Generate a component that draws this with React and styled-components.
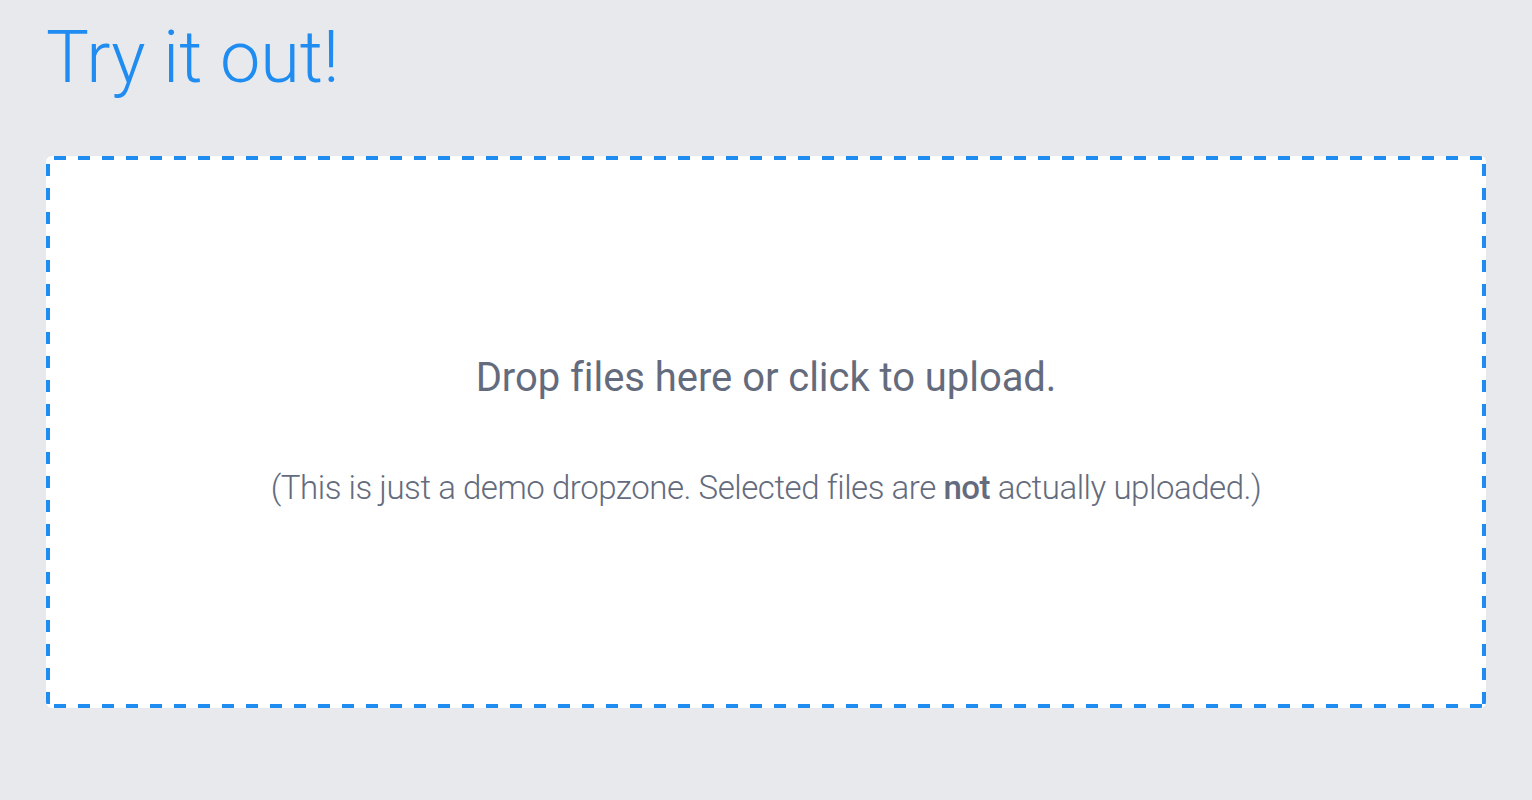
import React from "react";
import styled, { createGlobalStyle } from "styled-components";

const GlobalStyle = createGlobalStyle`
  html, body {
    margin: 0;
    padding: 0;
    background: #e8e9ed;
  }
  body {
    font-family: Roboto, "Open Sans", sans-serif;
  }
`;

const blue = "#1e8cf0";

const Page = styled.main`
  padding: 14px 46px 40px 46px;
`;

const Title = styled.h1`
  margin: 0 0 54px 0;
  font-size: 72px;
  font-weight: 300;
  line-height: 88px;
  color: ${blue};
`;

// dashed outline drawn with gradients so the dash length matches (12px on, 12px off)
const Dropzone = styled.div`
  box-sizing: border-box;
  height: 552px;
  background-color: #fff;
  background-image:
    linear-gradient(to right, ${blue} 50%, transparent 50%),
    linear-gradient(to right, ${blue} 50%, transparent 50%),
    linear-gradient(to bottom, ${blue} 50%, transparent 50%),
    linear-gradient(to bottom, ${blue} 50%, transparent 50%);
  background-size: 24px 4px, 24px 4px, 4px 24px, 4px 24px;
  background-repeat: repeat-x, repeat-x, repeat-y, repeat-y;
  background-position: 8px 0, 8px 100%, 0 8px, 100% 8px;
  border-radius: 6px;
  display: flex;
  flex-direction: column;
  align-items: center;
  justify-content: center;
  gap: 67px;
  padding-bottom: 4px;
  color: #646b7d;
  cursor: pointer;
`;

const Message = styled.div`
  font-size: 40px;
  font-weight: 400;
  letter-spacing: -0.05px;
`;

const Note = styled.div`
  font-size: 33px;
  font-weight: 300;
  letter-spacing: -0.45px;

  strong {
    font-weight: 500;
  }
`;

export default function App() {
  return (
    <>
      <GlobalStyle />
      <Page>
        <Title>Try it out!</Title>
        <Dropzone>
          <Message>Drop files here or click to upload.</Message>
          <Note>
            (This is just a demo dropzone. Selected files are <strong>not</strong> actually uploaded.)
          </Note>
        </Dropzone>
      </Page>
    </>
  );
}
